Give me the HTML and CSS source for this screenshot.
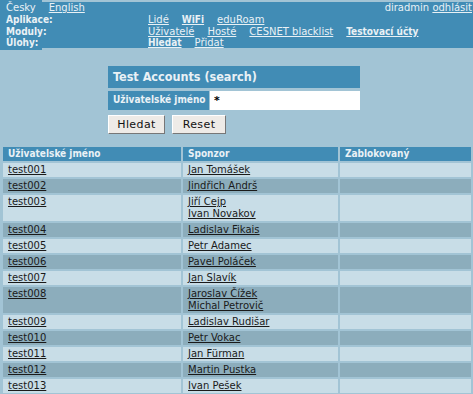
FILE: index.html
```html
<!DOCTYPE html>
<html lang="cs">
<head>
    <meta charset="UTF-8">
    <title>Test Accounts</title>
    <link rel="stylesheet" href="styles.css">
</head>
<body>
    <div class="top">
        <div class="lang"><span class="cur">Česky</span><a href="#">English</a></div>
        <div class="user">diradmin <a href="#">odhlásit</a></div>
        <div class="lbl">Aplikace:</div>
        <div class="items"><a href="#">Lidé</a><a href="#" class="sel">WiFi</a><a href="#">eduRoam</a></div>
        <div class="lbl">Moduly:</div>
        <div class="items"><a href="#">Uživatelé</a><a href="#">Hosté</a><a href="#">CESNET blacklist</a><a href="#" class="sel">Testovací účty</a></div>
        <div class="lbl">Úlohy:</div>
        <div class="items"><a href="#" class="sel tab">Hledat</a><a href="#">Přidat</a></div>
    </div>

    <div class="search">
        <div class="search-title">Test Accounts (search)</div>
        <div class="search-row">
            <label class="search-label" for="login">Uživatelské jméno</label>
            <input type="text" id="login" class="search-input" value="*">
        </div>
        <div class="buttons">
            <button>Hledat</button>
            <button>Reset</button>
        </div>
    </div>

    <table class="list">
        <colgroup>
            <col class="c1"><col class="c2"><col class="c3">
        </colgroup>
        <tr><th>Uživatelské jméno</th><th>Sponzor</th><th>Zablokovaný</th></tr>
        <tr class="odd"><td><a href="#">test001</a></td><td><a href="#">Jan Tomášek</a></td><td></td></tr>
        <tr class="even"><td><a href="#">test002</a></td><td><a href="#">Jindřich Andrš</a></td><td></td></tr>
        <tr class="odd"><td><a href="#">test003</a></td><td><a href="#">Jiří Cejp</a><br><a href="#">Ivan Novakov</a></td><td></td></tr>
        <tr class="even"><td><a href="#">test004</a></td><td><a href="#">Ladislav Fikais</a></td><td></td></tr>
        <tr class="odd"><td><a href="#">test005</a></td><td><a href="#">Petr Adamec</a></td><td></td></tr>
        <tr class="even"><td><a href="#">test006</a></td><td><a href="#">Pavel Poláček</a></td><td></td></tr>
        <tr class="odd"><td><a href="#">test007</a></td><td><a href="#">Jan Slavík</a></td><td></td></tr>
        <tr class="even"><td><a href="#">test008</a></td><td><a href="#">Jaroslav Čížek</a><br><a href="#">Michal Petrovič</a></td><td></td></tr>
        <tr class="odd"><td><a href="#">test009</a></td><td><a href="#">Ladislav Rudišar</a></td><td></td></tr>
        <tr class="even"><td><a href="#">test010</a></td><td><a href="#">Petr Vokac</a></td><td></td></tr>
        <tr class="odd"><td><a href="#">test011</a></td><td><a href="#">Jan Fürman</a></td><td></td></tr>
        <tr class="even"><td><a href="#">test012</a></td><td><a href="#">Martin Pustka</a></td><td></td></tr>
        <tr class="odd"><td><a href="#">test013</a></td><td><a href="#">Ivan Pešek</a></td><td></td></tr>
    </table>
</body>
</html>
```

FILE: styles.css
```css
body {
    margin: 0;
    font-family: "DejaVu Sans", Verdana, sans-serif;
    font-size: 10px;
    background-color: #a2c4d5;
    color: #1a1a1a;
}
.top {
    position: relative;
    margin-top: 2px;
    display: grid;
    grid-template-columns: 148px 1fr;
    grid-template-rows: 12px 12px 11px 11px;
    line-height: 12px;
    background-color: #418cb5;
    color: #e9f1f5;
}
.top::before {
    content: "";
    position: absolute;
    left: 0;
    top: -2px;
    bottom: -2px;
    width: 42px;
    background-color: #418cb5;
}
.top a {
    color: #e9f1f5;
}
.lang, .lbl {
    position: relative;
    padding-left: 6px;
}
.lang {
    display: flex;
    gap: 13px;
}
.user {
    text-align: right;
    padding-right: 1px;
}
.lbl {
    font-stretch: condensed;
    font-weight: bold;
}
.items {
    display: flex;
    gap: 13px;
    white-space: nowrap;
}
.items a {
    flex: none;
}
.items .sel {
    font-stretch: condensed;
    font-weight: bold;
}
.items .tab {
    margin-left: -5px;
    margin-right: -1px;
    padding: 0 1px 2px 5px;
    background-color: #418cb5;
}
.search {
    width: 252px;
    margin: 18px auto 0 108px;
}
.search-title {
    height: 22px;
    line-height: 22px;
    padding-left: 5px;
    background-color: #418cb5;
    color: #e9f1f5;
    font-size: 12.5px;
    font-weight: bold;
    font-stretch: condensed;
}
.search-row {
    display: flex;
    margin-top: 3px;
    height: 19px;
}
.search-label {
    flex: none;
    width: 96px;
    padding-left: 5px;
    line-height: 17px;
    white-space: nowrap;
    background-color: #418cb5;
    color: #e9f1f5;
    font-weight: bold;
    font-stretch: condensed;
}
.search-input {
    flex: 1;
    width: 0;
    min-width: 0;
    margin: 0 0 0 1px;
    padding: 0 4px;
    border: none;
    font-family: "DejaVu Sans", Verdana, sans-serif;
    font-size: 11px;
    font-weight: bold;
    color: #000;
    background: #fff;
}
.buttons {
    display: flex;
    gap: 7px;
    margin-top: 5px;
}
button {
    height: 19px;
    padding: 0;
    font-family: "DejaVu Sans", Verdana, sans-serif;
    font-size: 11px;
    letter-spacing: 0.4px;
    color: #111;
    background-color: #eeebe7;
    border: 1px solid;
    border-color: #fff #777 #777 #fff;
}
button:first-child {
    width: 57px;
}
button:last-child {
    width: 54px;
}
.list {
    width: 472px;
    margin: 11px 0 0 1px;
    border-spacing: 2px;
    line-height: 12px;
}
.c1 { width: 178px; }
.c2 { width: 155px; }
.list th, .list td {
    padding: 1px 5px;
    text-align: left;
    vertical-align: top;
}
.list th {
    background-color: #418cb5;
    color: #e9f1f5;
    font-weight: bold;
    font-stretch: condensed;
}
.list a {
    color: #1a1a1a;
}
.odd td {
    background-color: #c8dde7;
}
.even td {
    background-color: #8cadbc;
}
```
